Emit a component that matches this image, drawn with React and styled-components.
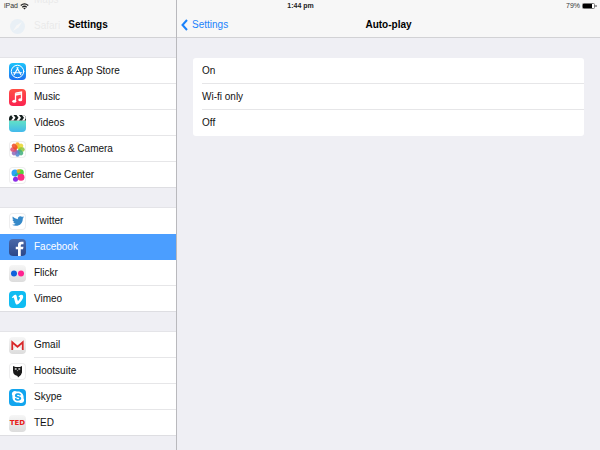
import React from 'react';
import styled, { createGlobalStyle, css } from 'styled-components';
import { FaTwitter, FaVimeoV, FaSkype } from 'react-icons/fa';

const GlobalStyle = createGlobalStyle`
  * { box-sizing: border-box; }
  body {
    margin: 0;
    background: #efeff4;
    color: #111;
    font: 10px/14px "Liberation Sans", Arial, sans-serif;
  }
`;

const Screen = styled.div`
  position: relative;
  display: grid;
  grid-template-columns: 177px 1fr;
  min-height: 100vh;
  overflow: hidden;
`;

const StatusBar = styled.header`
  position: absolute;
  inset: 0 0 auto;
  z-index: 2;
  display: grid;
  grid-template-columns: 1fr auto 1fr;
  align-items: center;
  height: 12px;
  padding: 0 3px 0 4px;
  font-size: 7px;
  line-height: 12px;
  color: #333;
`;

const StatusSide = styled.div`
  display: flex;
  align-items: center;
  gap: 2px;
  justify-content: ${(p) => (p.$end ? 'flex-end' : 'flex-start')};
`;

const Clock = styled.time`
  font-weight: 700;
  color: #222;
`;

const Sidebar = styled.nav`
  border-right: 1px solid #b9b9bd;
`;

const NavBar = styled.div`
  position: relative;
  display: grid;
  grid-template-columns: 1fr auto 1fr;
  align-items: center;
  height: 38px;
  padding: 12px 4px 0;
  overflow: hidden;
  background: #f7f7f7;
  border-bottom: 1px solid #d2d2d5;
`;

const Title = styled.h1`
  grid-column: 2;
  margin: 0;
  font-size: 10px;
  line-height: 14px;
  font-weight: 700;
  color: #000;
`;

const BackLink = styled.a`
  display: flex;
  align-items: center;
  gap: 4px;
  color: #1a82fb;
  text-decoration: none;
`;

const Behind = styled.div`
  position: absolute;
  inset: -13px 0 auto;
  opacity: 0.06;
`;

const Groups = styled.div`
  display: flex;
  flex-direction: column;
  gap: 20px;
  padding: 20px 0 14px;
`;

const Group = styled.ul`
  margin: 0;
  padding: 0;
  list-style: none;
  background: #fff;
  box-shadow: 0 -1px #e4e4e8, inset 0 -1px #dedee2;
`;

const RowLabel = styled.span`
  flex: 1;
  line-height: 26px;
`;

const rowStyle = css`
  display: flex;
  align-items: stretch;
  gap: 8px;
  width: 100%;
  height: 26px;
  padding: 0 0 0 9px;
  border: 0;
  background: none;
  font: inherit;
  text-align: left;
  color: inherit;
`;

const GhostRow = styled.div`
  ${rowStyle}
`;

const AppRow = styled.button`
  ${rowStyle}
  ${(p) => p.$selected && css`
    background: #4b9eff;
    color: #fff;
  `}
  ${RowLabel} {
    border-bottom: ${(p) => (p.$line ? '1px solid #e6e6e8' : '0')};
  }
`;

const Icon = styled.span`
  display: flex;
  align-items: center;
  justify-content: center;
  align-self: center;
  width: 17px;
  height: 17px;
  border-radius: 4px;
  overflow: hidden;
  color: ${(p) => p.$color || '#fff'};
  background: ${(p) => p.$bg || '#fff'};
  box-shadow: ${(p) => (p.$outlined ? 'inset 0 0 0 1px #eeeeef' : 'none')};
`;

const Card = styled.ul`
  margin: 20px 16px;
  padding: 0;
  list-style: none;
  background: #fff;
  border-radius: 3px;
`;

const Option = styled.button`
  ${rowStyle}
  ${RowLabel} {
    border-bottom: ${(p) => (p.$line ? '1px solid #e6e6e8' : '0')};
  }
`;

const Art = ({ children }) => (
  <svg width="17" height="17" viewBox="0 0 34 34" aria-hidden="true">{children}</svg>
);

const AppStoreArt = () => (
  <Art>
    <g fill="none" stroke="#fff" strokeLinecap="round">
      <circle cx="17" cy="17" r="12.5" strokeWidth="2" />
      <path d="M18 9.500 L10.500 23 M16 9.500 L23.500 23" strokeWidth="2.400" />
      <path d="M8.500 19.500 H25.500" strokeWidth="2.400" />
    </g>
  </Art>
);

const MusicArt = () => (
  <Art>
    <path d="M13 8.500 L25 6 V21 M13 8.500 V24 M13 12 L25 9.500" fill="none" stroke="#fff" strokeWidth="2.600" />
    <ellipse cx="10.500" cy="24.500" rx="4" ry="3.200" fill="#fff" />
    <ellipse cx="22.500" cy="21.500" rx="4" ry="3.200" fill="#fff" />
  </Art>
);

const VideosArt = () => (
  <Art>
    <defs>
      <linearGradient id="clap" x2="0" y2="1">
        <stop stopColor="#62e3c6" />
        <stop offset="1" stopColor="#43b9ec" />
      </linearGradient>
    </defs>
    <path d="M0 11 H34 V34 H0 Z" fill="url(#clap)" />
    <path d="M0 0 H34 V11 H0 Z" fill="#16201f" />
    <path d="M4 0 H9 L13 5.500 L9 11 H4 L8 5.500 Z M15 0 H20 L24 5.500 L20 11 H15 L19 5.500 Z M26 0 H31 L34 5.500 L31 11 H26 L30 5.500 Z" fill="#fff" />
  </Art>
);

const petals = ['#f8a41c', '#e8d52b', '#8fc43a', '#3fae7c', '#4a83cc', '#9068b8', '#e04a6c', '#ee4a22'];

const PhotosArt = () => (
  <Art>
    {petals.map((color, i) => (
      <rect key={color} x="12.500" y="2.500" width="9" height="13" rx="4.500" fill={color} opacity="0.85"
        transform={`rotate(${i * 45} 17 17)`} />
    ))}
  </Art>
);

const GameArt = () => (
  <Art>
    <circle cx="12" cy="12" r="7" fill="#2aa4f4" />
    <circle cx="23" cy="11" r="6.500" fill="#55cf3c" />
    <circle cx="19" cy="8" r="4" fill="#f5a623" opacity="0.75" />
    <path d="M17 12 a7 7 0 0 1 -3 7 l-4 -1 a8 8 0 0 1 7 -6" fill="#1fb2a6" />
    <circle cx="24" cy="20.500" r="7" fill="#fa2b83" />
    <circle cx="13" cy="24.500" r="5" fill="#8a2be8" />
  </Art>
);

const FacebookArt = () => (
  <Art>
    <path d="M18 34 V20.500 H13.500 V15.500 H18 V12 Q18 5.500 24.500 5.500 H29 V10.500 H26 Q23.500 10.500 23.500 13 V15.500 H29 L28 20.500 H23.500 V34 Z" fill="#fff" />
  </Art>
);

const FlickrArt = () => (
  <Art>
    <circle cx="10" cy="17" r="6" fill="#0f63dc" />
    <circle cx="24" cy="17" r="6" fill="#ff2390" />
  </Art>
);

const GmailArt = () => (
  <Art>
    <path d="M5 9 H29 V26 H5 Z" fill="#f9f9f9" />
    <path d="M5 26 L14 17 M29 26 L20 17" stroke="#cfcfcf" strokeWidth="1.500" />
    <path d="M6.500 26 V10.500 L17 19.500 L27.500 10.500 V26" fill="none" stroke="#d8292b" strokeWidth="3.600" />
  </Art>
);

const OwlArt = () => (
  <Art>
    <path d="M8 6 L13 8 H22 L26 6 V19 Q25 25 18 29 L17 26 Q8 24 8 15 Z" fill="#1a1a1a" />
    <circle cx="13.500" cy="12" r="2.200" fill="#ddd" />
    <circle cx="20.500" cy="12" r="2.200" fill="#ddd" />
    <circle cx="14" cy="12" r="1" fill="#1a1a1a" />
    <circle cx="20" cy="12" r="1" fill="#1a1a1a" />
    <path d="M15.500 14 H18.500 L17 17 Z" fill="#999" />
  </Art>
);

const CompassArt = () => (
  <Art>
    <circle cx="17" cy="17" r="15" fill="#1d8cf0" />
    <path d="M26 8 L19 19 L8 26 L15 15 Z" fill="#fff" />
  </Art>
);

const TedMark = styled.span`
  font: 700 7px/17px "DejaVu Sans", sans-serif;
`;

const silver = 'linear-gradient(#f6f6f6, #dcdcdc)';

const groups = [
  [
    { name: 'iTunes & App Store', bg: 'linear-gradient(#1cc4fb, #1c6ff0)', art: <AppStoreArt /> },
    { name: 'Music', bg: 'linear-gradient(#ff4f45, #fb2350)', art: <MusicArt /> },
    { name: 'Videos', art: <VideosArt /> },
    { name: 'Photos & Camera', outlined: true, art: <PhotosArt /> },
    { name: 'Game Center', outlined: true, art: <GameArt /> },
  ],
  [
    { name: 'Twitter', outlined: true, color: '#3589c9', art: <FaTwitter size={12} /> },
    { name: 'Facebook', bg: 'linear-gradient(#4a68a8, #2c4789)', art: <FacebookArt /> },
    { name: 'Flickr', bg: silver, art: <FlickrArt /> },
    { name: 'Vimeo', bg: '#0fbcf2', art: <FaVimeoV size={13} /> },
  ],
  [
    { name: 'Gmail', bg: silver, art: <GmailArt /> },
    { name: 'Hootsuite', outlined: true, art: <OwlArt /> },
    { name: 'Skype', bg: '#12a5ee', art: <FaSkype size={14} /> },
    { name: 'TED', bg: silver, color: '#e62019', art: <TedMark aria-hidden="true">TED</TedMark> },
  ],
];

const options = ['On', 'Wi-fi only', 'Off'];
const selectedApp = 'Facebook';

export default function App() {
  return (
    <>
      <GlobalStyle />
      <Screen>
        <StatusBar>
          <StatusSide>
            iPad
            <svg width="9" height="7" viewBox="0 0 18 14" fill="none" stroke="#222" strokeWidth="2.400" aria-label="Wi-Fi">
              <path d="M1.500 5 Q9 -1.500 16.500 5 M4.500 8.500 Q9 4.500 13.500 8.500" />
              <path d="M6.500 10.500 Q9 8.500 11.500 10.500 L9 13 Z" fill="#222" stroke="none" />
            </svg>
          </StatusSide>
          <Clock>1:44 pm</Clock>
          <StatusSide $end>
            79%
            <svg width="15" height="6" viewBox="0 0 15 6" aria-label="Battery">
              <rect x="0.500" y="0.500" width="12" height="5" rx="1" fill="#fff" stroke="#777" />
              <rect x="1" y="1" width="9" height="4" fill="#000" />
              <path d="M13.500 2 h1 v2 h-1 z" fill="#444" />
            </svg>
          </StatusSide>
        </StatusBar>

        <Sidebar aria-label="Settings">
          <NavBar>
            <Behind aria-hidden="true">
              <GhostRow>
                <Icon $bg="#f4c542" />
                <RowLabel>Maps</RowLabel>
              </GhostRow>
              <GhostRow>
                <Icon><CompassArt /></Icon>
                <RowLabel>Safari</RowLabel>
              </GhostRow>
            </Behind>
            <Title>Settings</Title>
          </NavBar>
          <Groups>
            {groups.map((apps) => (
              <Group key={apps[0].name}>
                {apps.map((app, i) => {
                  const selected = app.name === selectedApp;
                  const next = apps[i + 1];
                  const line = Boolean(next) && !selected && next.name !== selectedApp;
                  return (
                    <li key={app.name}>
                      <AppRow type="button" $selected={selected} $line={line} aria-current={selected || undefined}>
                        <Icon $bg={app.bg} $color={app.color} $outlined={app.outlined}>{app.art}</Icon>
                        <RowLabel>{app.name}</RowLabel>
                      </AppRow>
                    </li>
                  );
                })}
              </Group>
            ))}
          </Groups>
        </Sidebar>

        <main>
          <NavBar>
            <BackLink href="#settings">
              <svg width="7" height="12" viewBox="0 0 7 12" fill="none" stroke="#1a82fb" strokeWidth="2" aria-hidden="true">
                <path d="M6 1 L1.500 6 L6 11" />
              </svg>
              Settings
            </BackLink>
            <Title as="h2">Auto-play</Title>
          </NavBar>
          <Card>
            {options.map((label, i) => (
              <li key={label}>
                <Option type="button" $line={i < options.length - 1}>
                  <RowLabel>{label}</RowLabel>
                </Option>
              </li>
            ))}
          </Card>
        </main>
      </Screen>
    </>
  );
}
